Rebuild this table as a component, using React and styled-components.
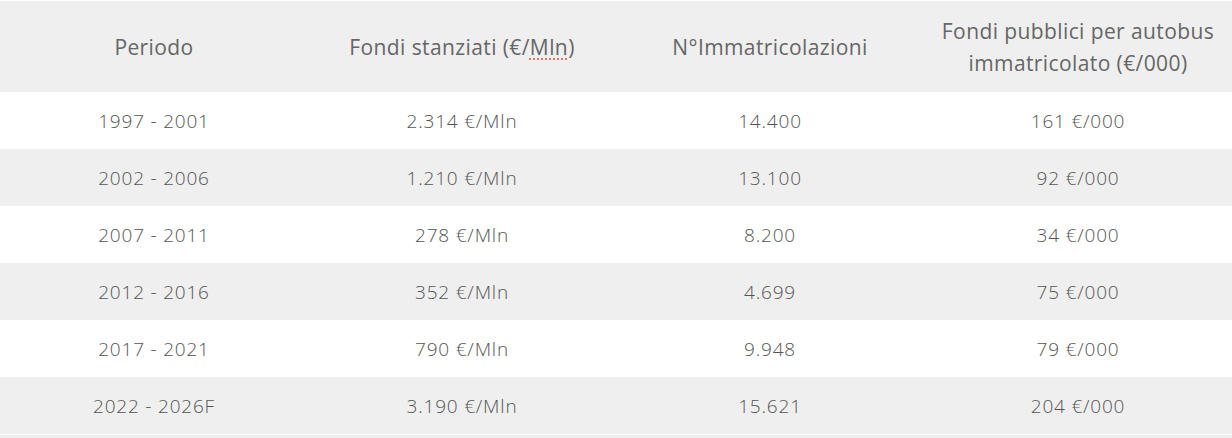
import React from "react";
import styled, { createGlobalStyle } from "styled-components";

const rows = [
  ["1997 - 2001", "2.314 €/Mln", "14.400", "161 €/000"],
  ["2002 - 2006", "1.210 €/Mln", "13.100", "92 €/000"],
  ["2007 - 2011", "278 €/Mln", "8.200", "34 €/000"],
  ["2012 - 2016", "352 €/Mln", "4.699", "75 €/000"],
  ["2017 - 2021", "790 €/Mln", "9.948", "79 €/000"],
  ["2022 - 2026F", "3.190 €/Mln", "15.621", "204 €/000"],
];

const GlobalStyle = createGlobalStyle`
  body {
    margin: 0;
    background: #fff;
    font-family: "Open Sans", "Liberation Sans", sans-serif;
  }
`;

const Wrap = styled.div`
  padding-top: 1px;
  background: #fff;
`;

const Table = styled.table`
  width: 1232px;
  border-collapse: collapse;
  table-layout: fixed;
  color: #666;
  border-bottom: 1px solid #fff;
`;

const HeadCell = styled.th`
  height: 91px;
  padding: 0 16px;
  background: #efefef;
  font-size: 21px;
  font-weight: 400;
  letter-spacing: 0.4px;
  line-height: 32px;
  text-align: center;
  vertical-align: middle;
`;

const Row = styled.tr`
  background: ${(p) => (p.$shaded ? "#efefef" : "#fff")};
`;

const Cell = styled.td`
  height: 57px;
  padding: 0 16px;
  color: #555;
  font-size: 19px;
  font-weight: 300;
  letter-spacing: 0.8px;
  text-align: center;
  vertical-align: middle;
`;

const Spell = styled.span`
  text-decoration: underline dotted #ef6f66;
  text-decoration-thickness: 2px;
  text-underline-offset: 4px;
`;

const Footer = styled.div`
  height: 4px;
  background: #efefef;
`;

export default function App() {
  return (
    <>
      <GlobalStyle />
      <Wrap>
        <Table>
          <thead>
            <tr>
              <HeadCell>Periodo</HeadCell>
              <HeadCell>
                Fondi stanziati (€/<Spell>Mln</Spell>)
              </HeadCell>
              <HeadCell>N°Immatricolazioni</HeadCell>
              <HeadCell>
                Fondi pubblici per autobus immatricolato (€/000)
              </HeadCell>
            </tr>
          </thead>
          <tbody>
            {rows.map((r, i) => (
              <Row key={r[0]} $shaded={i % 2 === 1}>
                {r.map((c, j) => (
                  <Cell key={j}>{c}</Cell>
                ))}
              </Row>
            ))}
          </tbody>
        </Table>
        <Footer />
      </Wrap>
    </>
  );
}
